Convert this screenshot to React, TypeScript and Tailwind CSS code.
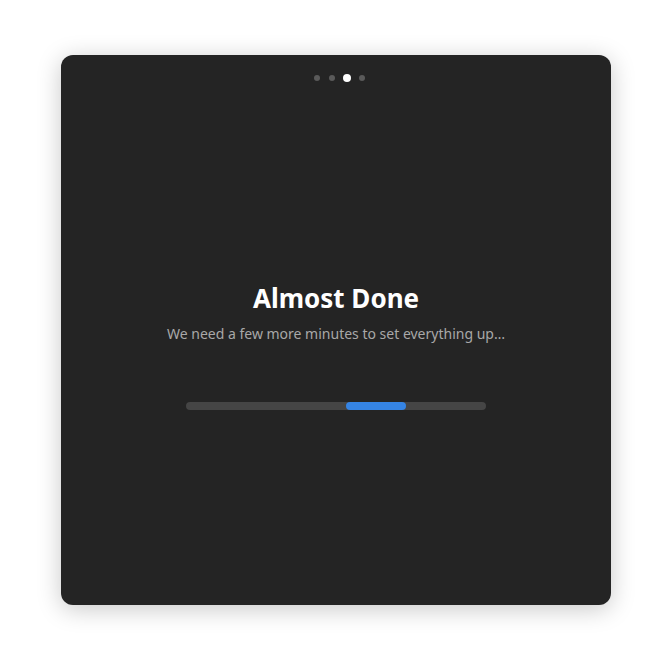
export default function App() {
  return (
    <div className="w-[672px] h-[672px] bg-white pt-[55px] pl-[61px]" style={{ fontFamily: '"Noto Sans", "Open Sans", sans-serif' }}>
      <div className="w-[550px] h-[550px] rounded-[12px] bg-[#242424] shadow-[0_4px_24px_rgba(0,0,0,0.22)] flex flex-col items-center">
        <div className="mt-[19px] ml-[7px] h-[8px] flex items-center">
          <div className="w-[6px] h-[6px] rounded-full bg-[#5a5a5a]" />
          <div className="ml-[9px] w-[6px] h-[6px] rounded-full bg-[#5a5a5a]" />
          <div className="ml-[8px] w-[8px] h-[8px] rounded-full bg-white" />
          <div className="ml-[8px] w-[6px] h-[6px] rounded-full bg-[#5a5a5a]" />
        </div>
        <div className="mt-[200px] text-[26px] leading-[32px] font-bold text-white">Almost Done</div>
        <div className="mt-[10px] text-[14px] leading-[20px] text-[#a8a8a8]">We need a few more minutes to set everything up…</div>
        <div className="mt-[58px] w-[300px] h-[8px] rounded-full bg-[#454545] relative">
          <div className="absolute left-[160px] top-0 w-[60px] h-[8px] rounded-full bg-[#3584e4]" />
        </div>
      </div>
    </div>
  );
}
